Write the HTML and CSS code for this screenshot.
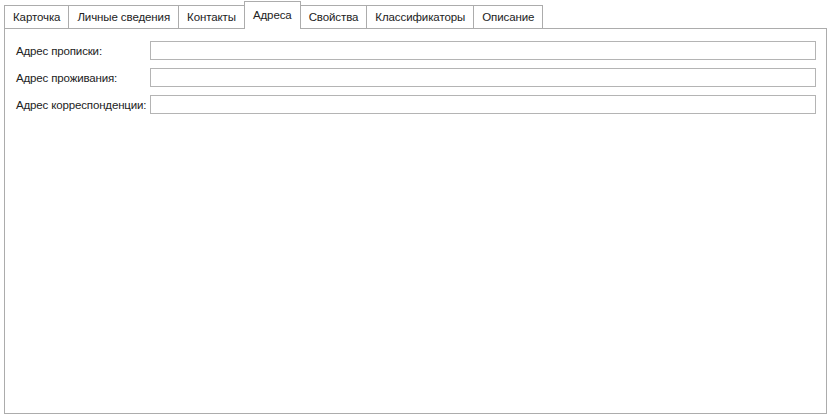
FILE: index.html
```html
<!DOCTYPE html>
<html lang="ru">
<head>
    <meta charset="UTF-8">
    <title>Адреса</title>
    <link rel="stylesheet" href="styles.css">
</head>
<body>
    <div class="tabs">
        <div class="tab">Карточка</div>
        <div class="tab">Личные сведения</div>
        <div class="tab">Контакты</div>
        <div class="tab active">Адреса</div>
        <div class="tab">Свойства</div>
        <div class="tab">Классификаторы</div>
        <div class="tab">Описание</div>
    </div>
    <div class="panel">
        <div class="form">
            <label for="addr-reg">Адрес прописки:</label>
            <input type="text" id="addr-reg">
            <label for="addr-live">Адрес проживания:</label>
            <input type="text" id="addr-live">
            <label for="addr-mail">Адрес корреспонденции:</label>
            <input type="text" id="addr-mail">
        </div>
    </div>
</body>
</html>
```

FILE: styles.css
```css
body {
    margin: 0;
    background: #fff;
    font-family: "Liberation Sans", Arial, sans-serif;
    font-size: 11.5px;
    color: #222;
}
.tabs {
    display: flex;
    align-items: flex-end;
    padding: 2px 0 0 4px;
    height: 26px;
    position: relative;
    z-index: 1;
}
.tab {
    height: 22px;
    line-height: 23px;
    padding: 0 8px;
    border: 1px solid #acacac;
    border-bottom: none;
    margin-right: -1px;
    background: #fff;
    white-space: nowrap;
    letter-spacing: -0.1px;
}
.tab.active {
    height: 26px;
    line-height: 26px;
    padding-bottom: 1px;
    margin-bottom: -1px;
}
.panel {
    margin-left: 4px;
    width: 821px;
    height: 384px;
    border: 1px solid #acacac;
}
.form {
    display: grid;
    grid-template-columns: 134px 1fr;
    row-gap: 8px;
    padding: 12px 10px 0 11px;
    align-items: center;
}
.form label {
    white-space: nowrap;
    letter-spacing: -0.15px;
}
.form input {
    box-sizing: border-box;
    height: 19px;
    margin: 0;
    border: 1px solid #b4b4b4;
    padding: 0 3px;
    font: inherit;
    outline: none;
}
```
